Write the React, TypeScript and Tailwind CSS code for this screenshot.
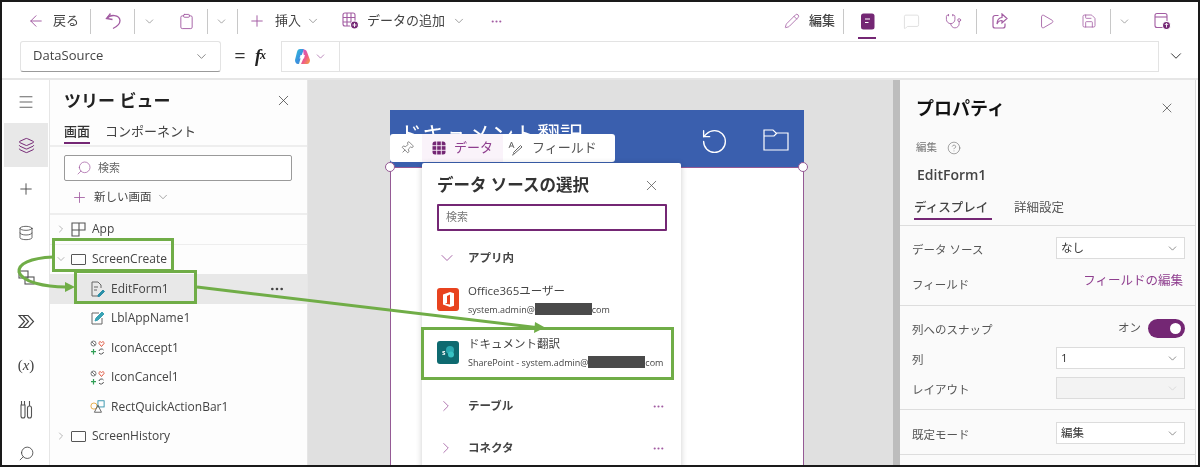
import {
  ArrowLeft, ChevronDown, ChevronRight, Clipboard, Database, Ellipsis, Layers, Menu, MessageSquare,
  Pencil, Pin, Play, Plus, Save, Search, Stethoscope, X, CircleHelp, RotateCcw,
} from 'lucide-react';

const PURPLE = '#742774';
const ICON = '#a25ca2';

function Divider({ className = '' }: { className?: string }) {
  return <div className={`w-px h-[25px] bg-[#c8c8c8] ${className}`} />;
}

function Toolbar() {
  return (
    <div className="flex items-center h-[38px] shrink-0 whitespace-nowrap text-[13px] text-[#444]">
      <ArrowLeft size={18} strokeWidth={1.3} color={ICON} className="ml-[25px]" />
      <span className="ml-[8px] w-[26px]">戻る</span>
      <Divider className="ml-[11px]" />
      <svg width="17" height="18" viewBox="0 0 17 18" fill="none" stroke={ICON} strokeWidth="1.3" className="ml-[14px]">
        <path d="M5.500 1.500L1.500 6.500L7.500 7.500" />
        <path d="M2 6.500C5 2 14.500 2.500 15 8.500C15 12 12 14.500 8 16.500" />
      </svg>
      <Divider className="ml-[12px] h-[20px]" />
      <ChevronDown size={13} strokeWidth={1.2} color="#777" className="ml-[8px]" />
      <Clipboard size={17} strokeWidth={1.3} color={ICON} className="ml-[22px]" />
      <Divider className="ml-[12px] h-[20px]" />
      <ChevronDown size={13} strokeWidth={1.2} color="#777" className="ml-[7px]" />
      <Divider className="ml-[9px]" />
      <Plus size={18} strokeWidth={1.3} color={ICON} className="ml-[10px]" />
      <span className="ml-[9px] w-[26px]">挿入</span>
      <ChevronDown size={14} strokeWidth={1.2} color="#777" className="ml-[5px]" />
      <TableAdd />
      <span className="ml-[8px] w-[78px]">データの追加</span>
      <ChevronDown size={14} strokeWidth={1.2} color="#777" className="ml-[7px]" />
      <Ellipsis size={13} color={ICON} className="ml-[24px]" />
      <div className="flex-1" />
      <Pencil size={16} strokeWidth={1.2} color={ICON} />
      <span className="ml-[9px] w-[26px] font-medium">編集</span>
      <Divider className="ml-[8px]" />
      <div className="relative ml-[14px] w-[18px] h-[38px] flex items-center justify-center">
        <svg width="15" height="17" viewBox="0 0 15 17">
          <rect x="1" y="0.5" width="13.5" height="16" rx="2.5" fill={PURPLE} />
          <path d="M5 6h5M5 9.5h3.5" stroke="#fff" strokeWidth="1.1" />
        </svg>
        <div className="absolute bottom-[1px] left-0 right-0 h-[2px] bg-[#742774]" />
      </div>
      <MessageSquare size={17} strokeWidth={1.1} color="#d8d8d8" className="ml-[27px]" />
      <Stethoscope size={17} strokeWidth={1.2} color={ICON} className="ml-[25px]" />
      <Divider className="ml-[14px]" />
      <svg width="16" height="16" viewBox="0 0 16 16" fill="none" stroke={ICON} strokeWidth="1.2" className="ml-[15px]">
        <path d="M6.500 2.500H3a2 2 0 0 0-2 2V13a2 2 0 0 0 2 2h8a2 2 0 0 0 2-2v-2.500" />
        <path d="M10 1l5 4.500-5 4.500V7.500C7.500 7.500 6 8.500 5 11c0-4 2-6.500 5-6.500z" />
      </svg>
      <Play size={17} strokeWidth={1.2} color={ICON} className="ml-[30px]" />
      <Save size={16} strokeWidth={1.2} color={ICON} className="ml-[26px]" />
      <Divider className="ml-[13px] h-[20px]" />
      <ChevronDown size={13} strokeWidth={1.2} color="#777" className="ml-[7px]" />
      <Publish />
      <div className="w-[27px]" />
    </div>
  );
}

function TableAdd() {
  return (
    <svg width="17" height="18" viewBox="0 0 17 18" className="ml-[22px]" fill="none" stroke={ICON} strokeWidth="1.1">
      <rect x="1" y="1" width="12" height="13" rx="2" />
      <path d="M1 5.500h12M1 10h12M5 1v13M9 1v13" />
      <circle cx="12.500" cy="13" r="4" fill={PURPLE} stroke="#fff" />
      <path d="M12.500 11v4M10.500 13h4" stroke="#fff" strokeWidth="0.9" />
    </svg>
  );
}

function Publish() {
  return (
    <svg width="17" height="18" viewBox="0 0 17 18" className="ml-[23px]" fill="none" stroke={ICON} strokeWidth="1.1">
      <rect x="1" y="1.500" width="12" height="14" rx="2" />
      <path d="M1 5h12" />
      <circle cx="12.500" cy="13.500" r="4" fill={PURPLE} stroke="#fff" />
      <path d="M12.500 15.500v-4M10.800 13l1.700-1.700 1.700 1.700" stroke="#fff" strokeWidth="0.9" />
    </svg>
  );
}

function Copilot() {
  return (
    <svg width="17" height="17" viewBox="0 0 17 17">
      <defs>
        <linearGradient id="cpA" x1="0" y1="0" x2="1" y2="1">
          <stop offset="0" stopColor="#2fc4d8" />
          <stop offset="0.6" stopColor="#3b8be0" />
          <stop offset="1" stopColor="#7be08a" />
        </linearGradient>
        <linearGradient id="cpB" x1="0" y1="0" x2="1" y2="1">
          <stop offset="0" stopColor="#c45ad8" />
          <stop offset="0.55" stopColor="#ee5a8a" />
          <stop offset="1" stopColor="#f5a83b" />
        </linearGradient>
      </defs>
      <path d="M6 1h4L7 9l-2 7H4c-2 0-3-2-3-4l2-8c.4-2 1.500-3 3-3z" fill="url(#cpA)" />
      <path d="M9 1.500c2 0 3.500.5 4 2.500l3 8c0 2-1 4-3 4H7l3-7z" fill="url(#cpB)" />
      <path d="M6.500 7h4.500l-1 3.500H5.500z" fill="#fff" opacity="0.9" />
    </svg>
  );
}

function FormulaBar() {
  return (
    <div className="flex items-center h-[32px] shrink-0 text-[#444]">
      <div className="ml-[18px] w-[201px] h-[31px] flex items-center justify-between pl-[12px] pr-[11px] bg-white border border-[#e3e3e3] border-b-[#9a9a9a] rounded-[3px] text-[13px]">
        <span>DataSource</span>
        <ChevronDown size={15} strokeWidth={1.2} color="#666" />
      </div>
      <span className="ml-[11px] w-[16px] text-center text-[20px] leading-none font-medium text-[#333]">=</span>
      <span className="ml-[7px] w-[20px] font-['Liberation_Serif',serif] italic font-bold text-[18px] tracking-[-1px] text-[#222]">
        f<span className="text-[12px] align-[3px]">x</span>
      </span>
      <div className="ml-[6px] w-[878px] h-[31px] flex bg-white border border-[#e3e3e3]">
        <div className="w-[58px] flex items-center pl-[12px] gap-[3px] border-r border-[#e3e3e3]">
          <Copilot />
          <ChevronDown size={13} strokeWidth={1.3} color={ICON} />
        </div>
      </div>
      <ChevronDown size={18} strokeWidth={1.3} color="#333" className="ml-[8px]" />
    </div>
  );
}

function RailIcon({ active, children, className = 'h-[44px]' }: { active?: boolean; children: React.ReactNode; className?: string }) {
  return <div className={`flex items-center justify-center w-[44px] shrink-0 ${active ? 'bg-[#e8e8e8]' : ''} ${className}`}>{children}</div>;
}

function Rail() {
  return (
    <div className="w-[48px] shrink-0 flex flex-col pl-[2px] border-r border-[#e6e6e6] bg-white overflow-hidden">
      <RailIcon className="h-[43px]"><Menu size={18} strokeWidth={1.1} color="#444" /></RailIcon>
      <RailIcon active><Layers size={17} strokeWidth={1.4} color={PURPLE} /></RailIcon>
      <RailIcon><Plus size={18} strokeWidth={1.2} color="#444" /></RailIcon>
      <RailIcon><Database size={16} strokeWidth={1.2} color="#444" /></RailIcon>
      <RailIcon>
        <svg width="17" height="17" viewBox="0 0 17 17" fill="none" stroke="#555" strokeWidth="1.1">
          <rect x="1" y="2" width="9" height="7" />
          <rect x="7" y="8" width="9" height="7" />
        </svg>
      </RailIcon>
      <RailIcon>
        <svg width="17" height="15" viewBox="0 0 17 15" fill="none" stroke="#444" strokeWidth="1.2">
          <path d="M1 1.500h9l5.500 6-5.500 6H1l5.500-6z" />
          <path d="M5 1.500l5.500 6-5.500 6" />
        </svg>
      </RailIcon>
      <RailIcon className="h-[44px] font-['Liberation_Serif',serif] text-[15px] text-[#444]">
        <span>(<i>x</i>)</span>
      </RailIcon>
      <RailIcon>
        <svg width="13" height="19" viewBox="0 0 13 19" fill="none" stroke="#555" strokeWidth="1.1">
          <path d="M1.500 1v4M4.500 1v4M1 5h4v11a2 2 0 0 1-4 0zM9.500 1v5" />
          <rect x="7.500" y="6" width="4" height="12" rx="2" />
        </svg>
      </RailIcon>
      <RailIcon><Search size={17} strokeWidth={1.2} color="#444" className="-scale-x-100" /></RailIcon>
    </div>
  );
}

function ScreenGlyph() {
  return <div className="w-[15px] h-[11px] border border-[#555] rounded-[1px]" />;
}

function AppGlyph() {
  return (
    <svg width="15" height="15" viewBox="0 0 15 15" fill="none" stroke="#555" strokeWidth="1.1">
      <path d="M1 1h13v7H8v6H1zM8 1v7M1 8h7" />
    </svg>
  );
}

function FormGlyph() {
  return (
    <svg width="15" height="16" viewBox="0 0 15 16" fill="none" stroke="#666" strokeWidth="1">
      <path d="M2 1h6l3 3v3M2 1v14h6" />
      <path d="M4 6h4M4 9h3" />
      <path d="M8 14l5-5 1.500 1.500-5 5H8z" fill="#2a8fa8" stroke="#2a8fa8" />
    </svg>
  );
}

function LabelGlyph() {
  return (
    <svg width="14" height="14" viewBox="0 0 14 14" fill="none" stroke="#666" strokeWidth="1">
      <path d="M11 7v6H1V2h7" />
      <path d="M4 10l1-3 6-6 2 2-6 6z" fill="#3aa3b5" stroke="#3aa3b5" />
    </svg>
  );
}

function IconsGlyph() {
  return (
    <svg width="15" height="15" viewBox="0 0 15 15" fill="none" strokeWidth="1">
      <circle cx="3.500" cy="3.500" r="2.500" stroke="#777" />
      <path d="M2 2l3 3" stroke="#777" />
      <path d="M11.500 6.500L9 3.500c-.6-1.500 1.500-2.500 2.500-1 1-1.500 3.100-.5 2.500 1z" stroke="#e0553d" />
      <path d="M3.500 9v5.500M1 11.700h5" stroke="#2f9e54" strokeWidth="1.200" />
      <path d="M9 11a2.500 2.500 0 0 1 4.500-1M13.500 12a2.500 2.500 0 0 1-4.500 1" stroke="#555" />
    </svg>
  );
}

function ShapesGlyph() {
  return (
    <svg width="17" height="15" viewBox="0 0 17 15" fill="none" strokeWidth="1">
      <circle cx="4.500" cy="7" r="3.500" stroke="#e3a53a" />
      <rect x="9" y="1" width="7" height="7" stroke="#2a8fa8" />
      <path d="M9 6l4 8H5z" stroke="#555" />
    </svg>
  );
}

const treeRows = [
  { label: 'App', icon: <AppGlyph />, arrow: 'right', depth: 0, line: true },
  { label: 'ScreenCreate', icon: <ScreenGlyph />, arrow: 'down', depth: 0 },
  { label: 'EditForm1', icon: <FormGlyph />, depth: 1, selected: true },
  { label: 'LblAppName1', icon: <LabelGlyph />, depth: 1 },
  { label: 'IconAccept1', icon: <IconsGlyph />, depth: 1 },
  { label: 'IconCancel1', icon: <IconsGlyph />, depth: 1 },
  { label: 'RectQuickActionBar1', icon: <ShapesGlyph />, depth: 1 },
  { label: 'ScreenHistory', icon: <ScreenGlyph />, arrow: 'right', depth: 0 },
];

function TreeView() {
  return (
    <div className="w-[258px] shrink-0 flex flex-col bg-[#fdfdfd] border-r border-[#e6e6e6] overflow-hidden">
      <div className="flex items-center justify-between h-[41px] shrink-0 pl-[14px] pr-[15px]">
        <span className="text-[17px] font-bold text-[#222]">ツリー ビュー</span>
        <X size={17} strokeWidth={1.1} color="#444" />
      </div>
      <div className="flex h-[26px] shrink-0 pl-[14px] border-b-2 border-[#eeeeee] text-[13px] text-[#444]">
        <div className="relative h-[23px] leading-[21px] font-medium text-[#333]">
          画面
          <div className="absolute bottom-0 left-0 right-0 h-[2px] bg-[#742774]" />
        </div>
        <div className="ml-[15px] leading-[21px]">コンポーネント</div>
      </div>
      <div className="ml-[14px] mt-[8px] w-[228px] h-[26px] shrink-0 flex items-center pl-[11px] gap-[6px] bg-white border border-[#9a9a9a] rounded-[2px] text-[11px] text-[#666]">
        <Search size={16} strokeWidth={1.1} color={ICON} className="-scale-x-100" />
        検索
      </div>
      <div className="flex items-center h-[34px] shrink-0 pl-[21px] border-b-2 border-[#eeeeee] text-[11.500px] text-[#444]">
        <Plus size={17} strokeWidth={1.2} color={ICON} />
        <span className="ml-[6px]">新しい画面</span>
        <ChevronDown size={14} strokeWidth={1.1} color="#777" className="ml-[4px]" />
      </div>
      {treeRows.map((row) => (
        <div
          key={row.label}
          className={`relative flex items-center h-[29.500px] shrink-0 text-[12px] text-[#444] ${row.selected ? 'bg-[#e8e8e8]' : ''} ${row.line ? 'border-b border-[#eeeeee]' : ''}`}
        >
          <div className="w-[21px] flex justify-center">
            {row.arrow === 'right' && <ChevronRight size={12} strokeWidth={1.2} color="#888" />}
            {row.arrow === 'down' && <ChevronDown size={12} strokeWidth={1.2} color="#888" />}
          </div>
          <div className={`flex justify-center w-[15px] ${row.depth ? 'ml-[19px]' : ''}`}>{row.icon}</div>
          <span className="ml-[6px]">{row.label}</span>
          {row.selected && <Ellipsis size={16} color="#444" className="absolute right-[22px]" />}
        </div>
      ))}
    </div>
  );
}

function Redacted() {
  return <span className="inline-block w-[57px] h-[12px] bg-[#4a4a4a] blur-[0.6px]" />;
}

function DataPopup() {
  return (
    <div className="absolute left-[114px] top-[83px] w-[259px] h-[310px] bg-white shadow-[0_1px_6px_rgba(0,0,0,0.2)] rounded-t-[2px] text-[#444] px-[15px]">
      <div className="flex items-center justify-between h-[41px] pt-[4px] pr-[6px]">
        <span className="text-[16.500px] font-bold text-[#333]">データ ソースの選択</span>
        <X size={17} strokeWidth={1.1} color="#555" />
      </div>
      <div className="w-[230px] h-[27px] flex items-center pl-[7px] border-2 border-[#742774] rounded-[1px] text-[11px] text-[#777]">検索</div>
      <div className="flex items-center h-[26px] mt-[14px] text-[11.500px] font-bold">
        <ChevronDown size={20} strokeWidth={1.1} color={ICON} />
        <span className="ml-[11px]">アプリ内</span>
      </div>
      <div className="flex items-center h-[44px] mt-[6px]">
        <div className="w-[22px] h-[23px] flex items-center justify-center bg-[#e8431f] rounded-[3px]">
          <svg width="13" height="15" viewBox="0 0 13 15" fill="#fff">
            <path d="M8 0L1 2.500v10L8 15l4-1.300V1.300zM8 2.500v10l-5-.7 2-.8V4z" fillRule="evenodd" />
          </svg>
        </div>
        <div className="ml-[9px]">
          <div className="text-[11.500px] leading-[20px]">Office365ユーザー</div>
          <div className="flex items-center text-[9px] leading-[17px]">system.admin@<Redacted />com</div>
        </div>
      </div>
      <div className="flex items-center h-[44px] mt-[9px]">
        <div className="w-[22px] h-[23px] flex items-center justify-center bg-[#0e6a70] rounded-[3px]">
          <svg width="14" height="12" viewBox="0 0 14 12">
            <circle cx="9" cy="4" r="4" fill="#2aa9b0" />
            <circle cx="10" cy="8.500" r="3" fill="#37c2c4" />
            <text x="1" y="9" fontSize="7" fill="#fff" fontWeight="700">s</text>
          </svg>
        </div>
        <div className="ml-[9px]">
          <div className="text-[11.500px] leading-[20px]">ドキュメント翻訳</div>
          <div className="flex items-center text-[9px] leading-[17px]">SharePoint - system.admin@<Redacted />com</div>
        </div>
      </div>
      {['テーブル', 'コネクタ'].map((label, i) => (
        <div key={label} className={`flex items-center justify-between h-[26px] pr-[1px] text-[11.500px] font-bold ${i ? 'mt-[16px]' : 'mt-[19px]'}`}>
          <div className="flex items-center">
            <ChevronRight size={18} strokeWidth={1.1} color={ICON} />
            <span className="ml-[13px]">{label}</span>
          </div>
          <Ellipsis size={13} color={ICON} />
        </div>
      ))}
    </div>
  );
}

function Canvas() {
  return (
    <div className="relative flex-1 min-w-0 bg-[#e0e0e0] overflow-hidden">
      <div className="ml-[82px] mt-[30px] w-[414px]">
        <div className="h-[57px] bg-[#3a5fae] flex items-start text-white">
          <span className="ml-[9px] mt-[9px] text-[23px] leading-[30px]">ドキュメント翻訳</span>
          <div className="flex-1" />
          <RotateCcw size={29} strokeWidth={1.1} className="mt-[17px]" />
          <svg width="26" height="23" viewBox="0 0 26 23" fill="none" stroke="#fff" strokeWidth="1.2" className="ml-[34px] mr-[15px] mt-[18px]">
            <path d="M1 2h9l3 3h12v17H1zM1 8h10l3-3" />
          </svg>
        </div>
        <div className="h-[400px] bg-white border border-[#955a95]" />
      </div>
      <div className="absolute left-[77px] top-[82px] w-[10px] h-[10px] bg-white border border-[#955a95] rounded-full" />
      <div className="absolute left-[490px] top-[82px] w-[10px] h-[10px] bg-white border border-[#955a95] rounded-full" />
      <div className="absolute left-[82px] top-[54px] w-[225px] h-[28px] flex items-center bg-white rounded-[3px] text-[13px] text-[#555]">
        <Pin size={14} strokeWidth={1.1} color="#555" className="ml-[10px] rotate-45" />
        <div className="ml-[8px] w-[81px] h-[28px] flex items-center pl-[10px] gap-[8px] pb-[1px] bg-[#faf3fa] text-[#8f3f8f]">
          <svg width="14" height="14" viewBox="0 0 14 14" fill={PURPLE}>
            <rect x="0.500" y="0.500" width="13" height="13" rx="2.500" />
            <path d="M0 4.700h14M0 9.300h14M4.700 0v14M9.300 0v14" stroke="#faf3fa" strokeWidth="0.9" />
          </svg>
          データ
        </div>
        <svg width="16" height="15" viewBox="0 0 16 15" fill="none" stroke="#666" strokeWidth="1" className="ml-[5px]">
          <path d="M1 7l2.500-6L6 7M2 5h3" />
          <path d="M6 13l8-7-1.500-1.500-7 7zM4 14c1 0 2-.5 2-1" />
        </svg>
        <span className="ml-[8px]">フィールド</span>
      </div>
      <DataPopup />
    </div>
  );
}

function PropSelect({ value, disabled }: { value?: string; disabled?: boolean }) {
  return (
    <div className={`w-[129px] h-[22px] flex items-center justify-between pl-[4px] pr-[5px] border border-[#dcdcdc] text-[11.500px] text-[#333] ${disabled ? 'bg-[#f3f3f3]' : 'bg-white'}`}>
      <span>{value}</span>
      <ChevronDown size={13} strokeWidth={1.2} color={disabled ? '#ccc' : '#555'} />
    </div>
  );
}

function PropRow({ label, children, className = '' }: { label: string; children: React.ReactNode; className?: string }) {
  return (
    <div className={`flex items-center justify-between pl-[12px] pr-[10px] h-[22px] shrink-0 text-[11.500px] text-[#555] ${className}`}>
      <span className="pt-[3px]">{label}</span>
      {children}
    </div>
  );
}

function Properties() {
  return (
    <div className="w-[296px] mr-[2px] shrink-0 flex flex-col bg-[#fafafa] border-r border-[#dddddd] overflow-hidden">
      <div className="flex items-center justify-between h-[42px] mt-[7px] shrink-0 pl-[16px] pr-[20px]">
        <span className="text-[18px] font-semibold text-[#111]">プロパティ</span>
        <X size={16} strokeWidth={1.1} color="#444" />
      </div>
      <div className="flex items-center h-[16px] mt-[11px] shrink-0 pl-[16px] text-[10.500px] text-[#777]">
        編集
        <CircleHelp size={14} strokeWidth={1} color="#666" className="ml-[10px]" />
      </div>
      <div className="h-[20px] mt-[9px] shrink-0 pl-[17px] text-[14px] leading-[20px] font-semibold text-[#444]">EditForm1</div>
      <div className="flex h-[30px] mt-[11px] shrink-0 pl-[14px] border-b border-[#dddddd] text-[12.500px] text-[#555]">
        <div className="relative h-[24px] w-[78px] leading-[24px] font-medium text-[#444]">
          ディスプレイ
          <div className="absolute bottom-0 left-0 right-0 h-[2px] bg-[#742774]" />
        </div>
        <div className="ml-[22px] leading-[24px]">詳細設定</div>
      </div>
      <PropRow label="データ ソース" className="mt-[11px]"><PropSelect value="なし" /></PropRow>
      <PropRow label="フィールド" className="mt-[13px] mb-[11px]">
        <span className="text-[#8f3f8f] text-[12.500px] pr-[2px] mb-[4px]">フィールドの編集</span>
      </PropRow>
      <div className="h-px shrink-0 bg-[#dddddd]" />
      <PropRow label="列へのスナップ" className="mt-[11px]">
        <div className="flex items-center">
          <span className="mr-[7px] text-[#555]">オン</span>
          <div className="w-[37px] h-[19px] flex items-center justify-end pr-[4px] bg-[#742774] rounded-full">
            <div className="w-[11px] h-[11px] bg-white rounded-full" />
          </div>
        </div>
      </PropRow>
      <PropRow label="列" className="mt-[8px]"><PropSelect value="1" /></PropRow>
      <PropRow label="レイアウト" className="mt-[8px]"><PropSelect disabled /></PropRow>
      <div className="h-px mt-[10px] shrink-0 bg-[#dddddd]" />
      <PropRow label="既定モード" className="mt-[12px]"><PropSelect value="編集" /></PropRow>
      <div className="h-px mt-[10px] shrink-0 bg-[#dddddd]" />
    </div>
  );
}

function Annotations() {
  return (
    <>
      <div className="absolute left-[52px] top-[238px] w-[122px] h-[34px] border-[3px] border-[#70ad47]" />
      <div className="absolute left-[74px] top-[270px] w-[123px] h-[34px] border-[3px] border-[#70ad47]" />
      <div className="absolute left-[421px] top-[327px] w-[253px] h-[53px] border-[3px] border-[#70ad47]" />
      <svg width="1200" height="467" viewBox="0 0 1200 467" fill="none" className="absolute left-0 top-0 pointer-events-none">
        <path d="M53 257 C 30 258 18 264 19 272 C 22 282 45 287 66 287" stroke="#70ad47" strokeWidth="3" />
        <path d="M65 282 L75 287 L65 292 Z" fill="#70ad47" />
        <path d="M197 287 L536 327.500" stroke="#70ad47" strokeWidth="3" />
        <path d="M535 322 L545 327.500 L534 333 Z" fill="#70ad47" />
      </svg>
    </>
  );
}

export default function App() {
  return (
    <div className="relative w-[1200px] h-[467px] overflow-hidden bg-white blur-[0.3px] font-['Open_Sans','Noto_Sans_CJK_JP',sans-serif]">
      <div className="w-full h-full flex flex-col border-2 border-[#1a1a1a]">
        <Toolbar />
        <FormulaBar />
        <div className="h-[6px] shrink-0" />
        <div className="h-[2px] shrink-0 bg-[#e6e6e6]" />
        <div className="flex flex-1 min-h-0">
          <Rail />
          <TreeView />
          <Canvas />
          <div className="w-[7px] shrink-0 bg-[#bdbdbd]" />
          <Properties />
        </div>
      </div>
      <Annotations />
    </div>
  );
}
